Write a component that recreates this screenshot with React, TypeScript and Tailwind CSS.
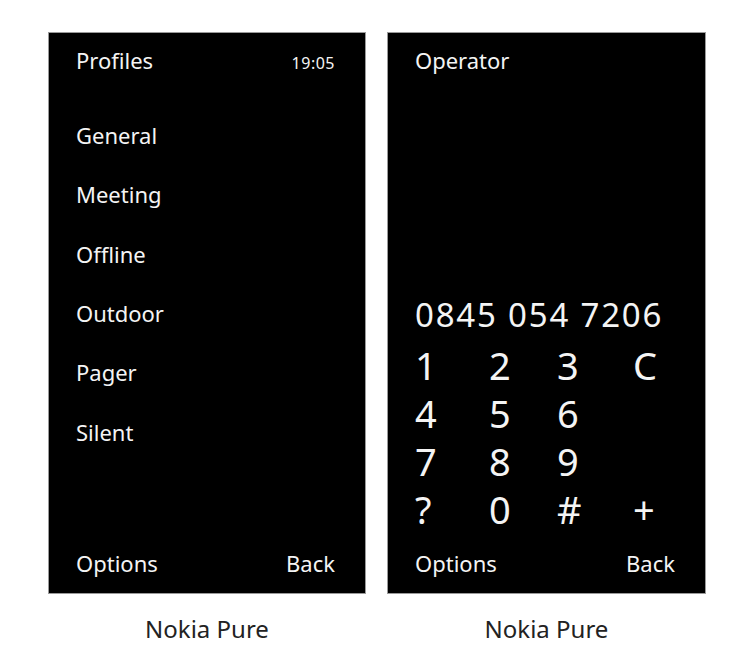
const profiles = ["General", "Meeting", "Offline", "Outdoor", "Pager", "Silent"];

const keys = ["1", "2", "3", "C", "4", "5", "6", "", "7", "8", "9", "", "?", "0", "#", "+"];

function SoftKeys() {
  return (
    <div className="mt-auto flex justify-between text-[22px] leading-[30px] pb-[15.5px]">
      <span>Options</span>
      <span>Back</span>
    </div>
  );
}

function Caption() {
  return (
    <div className="mt-[18.5px] text-center text-[24px] leading-[32px] text-[#222]">
      Nokia Pure
    </div>
  );
}

export default function App() {
  return (
    <div
      className="min-h-screen bg-white pt-[32px] pl-[48px] flex gap-[21px]"
      style={{ fontFamily: '"Noto Sans", "Open Sans", sans-serif' }}>
      <div className="w-[318px]">
        <div className="h-[562px] bg-black border border-[#9a9a9a] text-[#f4f4f4] flex flex-col pl-[27px] pr-[30px]">
          <div className="pt-[11.5px] flex justify-between items-baseline">
            <span className="text-[22px] leading-[30px]">Profiles</span>
            <span className="text-[16px] tracking-[0.5px]">19:05</span>
          </div>
          <ul className="mt-[31.3px]">
            {profiles.map((p) => (
              <li key={p} className="text-[22px] leading-[59.4px]">
                {p}
              </li>
            ))}
          </ul>
          <SoftKeys />
        </div>
        <Caption />
      </div>

      <div className="w-[319px]">
        <div className="h-[562px] bg-black border border-[#9a9a9a] text-[#f4f4f4] flex flex-col pl-[27px] pr-[30px]">
          <div className="pt-[11.5px] text-[22px] leading-[30px]">Operator</div>
          <div className="mt-auto text-[33px] leading-[40px] tracking-[1.8px]">
            0845 054 7206
          </div>
          <div className="mt-[6px] mb-[15px] grid grid-cols-[74px_68px_76px_1fr] text-[38px] leading-[48px]">
            {keys.map((k, i) => (
              <span key={i}>{k}</span>
            ))}
          </div>
          <div className="flex justify-between text-[22px] leading-[30px] pb-[15.5px]">
            <span>Options</span>
            <span>Back</span>
          </div>
        </div>
        <Caption />
      </div>
    </div>
  );
}
